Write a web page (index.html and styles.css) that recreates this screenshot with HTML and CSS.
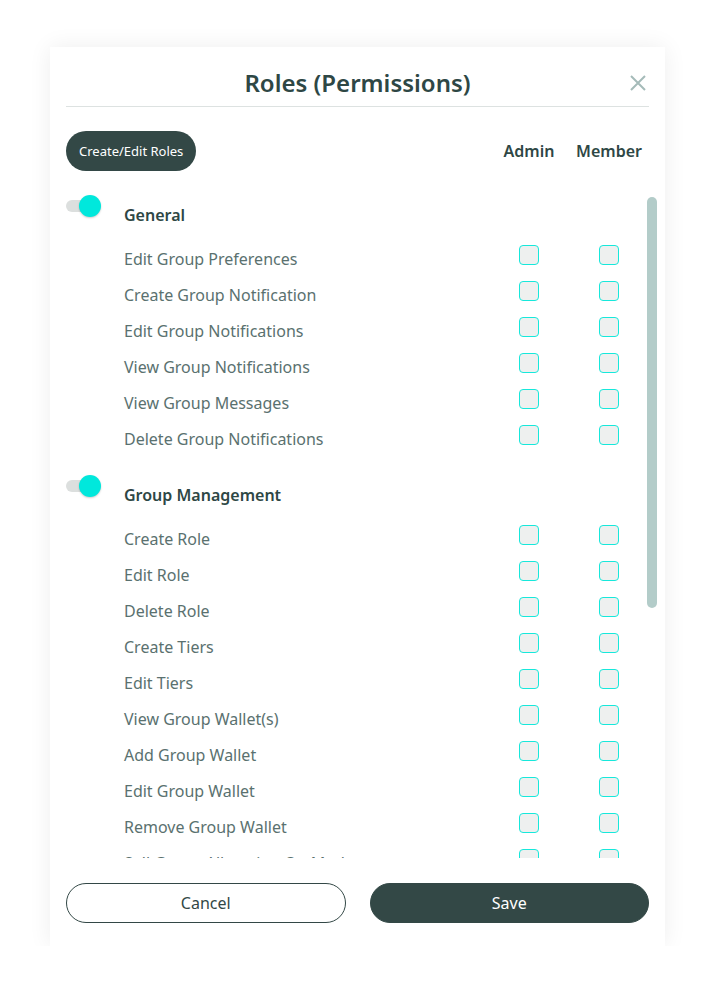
FILE: index.html
```html
<!DOCTYPE html>
<html lang="en">
<head>
    <meta charset="UTF-8">
    <meta name="viewport" content="width=device-width, initial-scale=1.0">
    <title>Roles (Permissions)</title>
    <link rel="stylesheet" href="styles.css">
</head>
<body>

    <div class="modal">
        <div class="modal-header">
            <h1>Roles (Permissions)</h1>
            <button class="close-btn" aria-label="Close">
                <svg width="18" height="18" viewBox="0 0 18 18">
                    <path d="M2 2 L16 16 M16 2 L2 16" stroke="#a5bbb9" stroke-width="2" fill="none"/>
                </svg>
            </button>
        </div>

        <div class="toolbar">
            <button class="pill-btn">Create/Edit Roles</button>
            <div class="role-cols">
                <span class="role-col">Admin</span>
                <span class="role-col">Member</span>
            </div>
        </div>

        <div class="perm-wrap">
            <div class="perm-list">
                <div class="section">
                    <div class="section-head">
                        <span class="toggle on"><span class="knob"></span></span>
                        <span class="section-title">General</span>
                    </div>
                    <div class="perm-row"><span class="perm-label">Edit Group Preferences</span><span class="check"></span><span class="check"></span></div>
                    <div class="perm-row"><span class="perm-label">Create Group Notification</span><span class="check"></span><span class="check"></span></div>
                    <div class="perm-row"><span class="perm-label">Edit Group Notifications</span><span class="check"></span><span class="check"></span></div>
                    <div class="perm-row"><span class="perm-label">View Group Notifications</span><span class="check"></span><span class="check"></span></div>
                    <div class="perm-row"><span class="perm-label">View Group Messages</span><span class="check"></span><span class="check"></span></div>
                    <div class="perm-row"><span class="perm-label">Delete Group Notifications</span><span class="check"></span><span class="check"></span></div>
                </div>

                <div class="section">
                    <div class="section-head">
                        <span class="toggle on"><span class="knob"></span></span>
                        <span class="section-title">Group Management</span>
                    </div>
                    <div class="perm-row"><span class="perm-label">Create Role</span><span class="check"></span><span class="check"></span></div>
                    <div class="perm-row"><span class="perm-label">Edit Role</span><span class="check"></span><span class="check"></span></div>
                    <div class="perm-row"><span class="perm-label">Delete Role</span><span class="check"></span><span class="check"></span></div>
                    <div class="perm-row"><span class="perm-label">Create Tiers</span><span class="check"></span><span class="check"></span></div>
                    <div class="perm-row"><span class="perm-label">Edit Tiers</span><span class="check"></span><span class="check"></span></div>
                    <div class="perm-row"><span class="perm-label">View Group Wallet(s)</span><span class="check"></span><span class="check"></span></div>
                    <div class="perm-row"><span class="perm-label">Add Group Wallet</span><span class="check"></span><span class="check"></span></div>
                    <div class="perm-row"><span class="perm-label">Edit Group Wallet</span><span class="check"></span><span class="check"></span></div>
                    <div class="perm-row"><span class="perm-label">Remove Group Wallet</span><span class="check"></span><span class="check"></span></div>
                    <div class="perm-row"><span class="perm-label">Sell Group Allocation On Market</span><span class="check"></span><span class="check"></span></div>
                </div>
            </div>
            <div class="scroll-thumb"></div>
        </div>

        <div class="modal-footer">
            <button class="footer-btn cancel">Cancel</button>
            <button class="footer-btn save">Save</button>
        </div>
    </div>

</body>
</html>
```

FILE: styles.css
```css
body {
    font-family: "Noto Sans", "Open Sans", sans-serif;
    background-color: #fff;
    margin: 0;
    padding: 0;
}

button {
    font-family: inherit;
    cursor: pointer;
}

.modal {
    width: 583px;
    margin: 47px 0 0 50px;
    padding: 0 16px 23px;
    background-color: #fff;
    box-shadow: 0 0 22px rgba(0, 0, 0, 0.07);
}

.modal-header {
    position: relative;
    padding: 20px 0 8px;
    border-bottom: 1px solid #dde2e1;
    text-align: center;
}

.modal-header h1 {
    margin: 0;
    font-size: 24px;
    line-height: 31px;
    font-weight: 600;
    color: #2e4745;
}

.close-btn {
    position: absolute;
    right: 2px;
    top: 27px;
    padding: 0;
    border: none;
    background: none;
    display: flex;
}

.toolbar {
    display: flex;
    align-items: center;
    justify-content: space-between;
    margin-top: 24px;
}

.pill-btn {
    height: 40px;
    padding: 0 13px;
    border: none;
    border-radius: 20px;
    background-color: #334846;
    color: #fff;
    font-size: 13px;
}

.role-cols {
    display: flex;
}

.role-col {
    width: 80px;
    text-align: center;
    font-size: 16px;
    font-weight: 600;
    color: #2e4745;
}

.perm-wrap {
    position: relative;
    margin-top: 20px;
}

.perm-list {
    height: 661px;
    padding-top: 6px;
    overflow: hidden;
}

.scroll-thumb {
    position: absolute;
    top: 6px;
    right: -8px;
    width: 10px;
    height: 411px;
    border-radius: 5px;
    background-color: #b3ccc9;
}

.section + .section {
    margin-top: 20px;
}

.section-head {
    display: flex;
    height: 36px;
    margin-bottom: 8px;
}

.toggle {
    position: relative;
    width: 31px;
    height: 12px;
    margin-top: 3px;
    border-radius: 6px;
    background-color: #dcdfde;
}

.toggle .knob {
    position: absolute;
    right: -4px;
    top: -5px;
    width: 22px;
    height: 22px;
    border-radius: 50%;
    background-color: #00e8dc;
    box-shadow: 0 1px 2px rgba(0, 0, 0, 0.2);
}

.section-title {
    margin-left: 27px;
    font-size: 16px;
    line-height: 36px;
    font-weight: 600;
    color: #2e4745;
}

.perm-row {
    display: flex;
    height: 36px;
    padding-left: 58px;
    padding-right: 30px;
}

.perm-label {
    flex: 1;
    font-size: 16px;
    line-height: 36px;
    color: #5a716f;
}

.check {
    box-sizing: border-box;
    width: 20px;
    height: 20px;
    margin-top: 4px;
    border: 1px solid #16e8db;
    border-radius: 4px;
    background-color: #eef0ef;
}

.check + .check {
    margin-left: 60px;
}

.modal-footer {
    display: flex;
    gap: 24px;
    margin-top: 25px;
}

.footer-btn {
    flex: 1;
    height: 40px;
    border-radius: 20px;
    font-size: 16px;
}

.footer-btn.cancel {
    background-color: #fff;
    border: 1px solid #334846;
    color: #334846;
}

.footer-btn.save {
    background-color: #334846;
    border: 1px solid #334846;
    color: #fff;
}
```
